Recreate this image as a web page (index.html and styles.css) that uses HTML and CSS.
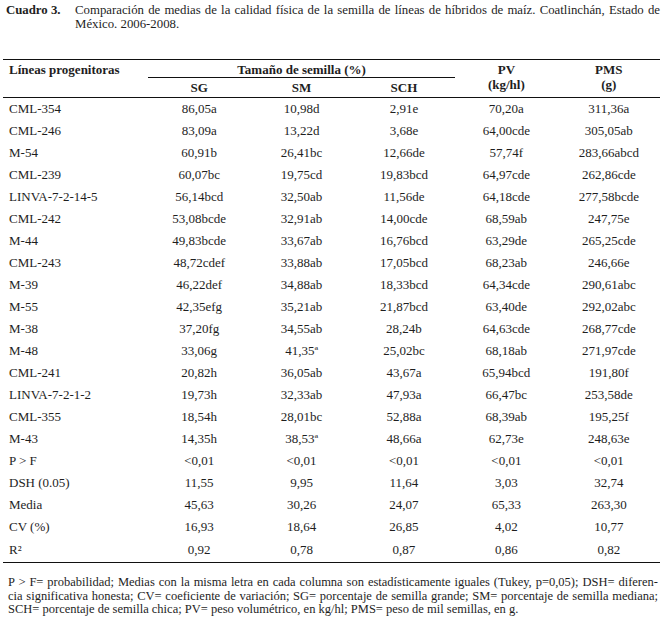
FILE: index.html
```html
<!DOCTYPE html>
<html lang="es">
<head>
<meta charset="utf-8">
<title>Cuadro 3</title>
<link rel="stylesheet" href="styles.css">
</head>
<body>
<div class="page">
  <div class="caption">
    <div class="cap-label">Cuadro 3.</div>
    <div class="cap-text">
      <span class="jline">Comparación de medias de la calidad física de la semilla de líneas de híbridos de maíz. Coatlinchán, Estado de</span>
      <span class="line">México. 2006-2008.</span>
    </div>
  </div>

  <table class="data">
    <thead>
      <tr class="h1">
        <th rowspan="2" class="lab">Líneas progenitoras</th>
        <th colspan="3" class="group">Tamaño de semilla (%)</th>
        <th rowspan="2" class="two">PV<br>(kg/hl)</th>
        <th rowspan="2" class="two">PMS<br>(g)</th>
      </tr>
      <tr class="h2">
        <th>SG</th>
        <th>SM</th>
        <th>SCH</th>
      </tr>
    </thead>
    <tbody>
      <tr><td class="lab">CML-354</td><td>86,05a</td><td>10,98d</td><td>2,91e</td><td>70,20a</td><td>311,36a</td></tr>
      <tr><td class="lab">CML-246</td><td>83,09a</td><td>13,22d</td><td>3,68e</td><td>64,00cde</td><td>305,05ab</td></tr>
      <tr><td class="lab">M-54</td><td>60,91b</td><td>26,41bc</td><td>12,66de</td><td>57,74f</td><td>283,66abcd</td></tr>
      <tr><td class="lab">CML-239</td><td>60,07bc</td><td>19,75cd</td><td>19,83bcd</td><td>64,97cde</td><td>262,86cde</td></tr>
      <tr><td class="lab">LINVA-7-2-14-5</td><td>56,14bcd</td><td>32,50ab</td><td>11,56de</td><td>64,18cde</td><td>277,58bcde</td></tr>
      <tr><td class="lab">CML-242</td><td>53,08bcde</td><td>32,91ab</td><td>14,00cde</td><td>68,59ab</td><td>247,75e</td></tr>
      <tr><td class="lab">M-44</td><td>49,83bcde</td><td>33,67ab</td><td>16,76bcd</td><td>63,29de</td><td>265,25cde</td></tr>
      <tr><td class="lab">CML-243</td><td>48,72cdef</td><td>33,88ab</td><td>17,05bcd</td><td>68,23ab</td><td>246,66e</td></tr>
      <tr><td class="lab">M-39</td><td>46,22def</td><td>34,88ab</td><td>18,33bcd</td><td>64,34cde</td><td>290,61abc</td></tr>
      <tr><td class="lab">M-55</td><td>42,35efg</td><td>35,21ab</td><td>21,87bcd</td><td>63,40de</td><td>292,02abc</td></tr>
      <tr><td class="lab">M-38</td><td>37,20fg</td><td>34,55ab</td><td>28,24b</td><td>64,63cde</td><td>268,77cde</td></tr>
      <tr><td class="lab">M-48</td><td>33,06g</td><td>41,35ª</td><td>25,02bc</td><td>68,18ab</td><td>271,97cde</td></tr>
      <tr><td class="lab">CML-241</td><td>20,82h</td><td>36,05ab</td><td>43,67a</td><td>65,94bcd</td><td>191,80f</td></tr>
      <tr><td class="lab">LINVA-7-2-1-2</td><td>19,73h</td><td>32,33ab</td><td>47,93a</td><td>66,47bc</td><td>253,58de</td></tr>
      <tr><td class="lab">CML-355</td><td>18,54h</td><td>28,01bc</td><td>52,88a</td><td>68,39ab</td><td>195,25f</td></tr>
      <tr><td class="lab">M-43</td><td>14,35h</td><td>38,53ª</td><td>48,66a</td><td>62,73e</td><td>248,63e</td></tr>
      <tr><td class="lab">P &gt; F</td><td>&lt;0,01</td><td>&lt;0,01</td><td>&lt;0,01</td><td>&lt;0,01</td><td>&lt;0,01</td></tr>
      <tr><td class="lab">DSH (0.05)</td><td>11,55</td><td>9,95</td><td>11,64</td><td>3,03</td><td>32,74</td></tr>
      <tr><td class="lab">Media</td><td>45,63</td><td>30,26</td><td>24,07</td><td>65,33</td><td>263,30</td></tr>
      <tr><td class="lab">CV (%)</td><td>16,93</td><td>18,64</td><td>26,85</td><td>4,02</td><td>10,77</td></tr>
      <tr><td class="lab">R²</td><td>0,92</td><td>0,78</td><td>0,87</td><td>0,86</td><td>0,82</td></tr>
    </tbody>
  </table>

  <div class="foot">
    <span class="jline">P &gt; F= probabilidad; Medias con la misma letra en cada columna son estadísticamente iguales (Tukey, p=0,05); DSH= diferen-</span>
    <span class="jline">cia significativa honesta; CV= coeficiente de variación; SG= porcentaje de semilla grande; SM= porcentaje de semilla mediana;</span>
    <span class="line">SCH= porcentaje de semilla chica; PV= peso volumétrico, en kg/hl; PMS= peso de mil semillas, en g.</span>
  </div>
</div>
</body>
</html>
```

FILE: styles.css
```css
html, body {
  margin: 0;
  padding: 0;
  background: #fff;
}

.page {
  width: 663px;
  font-family: "Liberation Serif", "Times New Roman", serif;
  color: #1e1e1e;
}

.caption {
  display: flex;
  padding: 3px 3px 0 6px;
  font-size: 12.8px;
  line-height: 14px;
}

.cap-label {
  flex: 0 0 69px;
  font-weight: bold;
}

.cap-text {
  flex: 1;
}

.jline {
  display: block;
  text-align: justify;
  text-align-last: justify;
  white-space: nowrap;
}

.line {
  display: block;
  white-space: nowrap;
}

.data {
  margin: 28px 0 0 3px;
  width: 657px;
  border-collapse: collapse;
  table-layout: fixed;
  font-size: 13px;
  border-top: 1px solid #111;
  border-bottom: 1px solid #111;
}

.data th,
.data td {
  padding: 0;
  text-align: center;
  font-weight: normal;
}

.data thead th {
  font-weight: bold;
}

.data th.lab,
.data td.lab {
  width: 139px;
  text-align: left;
  padding-left: 6px;
}

.data .h1 th {
  height: 15px;
  line-height: 15px;
  vertical-align: top;
  padding-top: 2px;
}

.data .h1 th.group {
  border-bottom: 1px solid #111;
}

.data .h2 th {
  height: 19px;
  line-height: 19px;
  vertical-align: middle;
}

.data thead tr.h2 th,
.data thead th.lab,
.data thead th.two {
  border-bottom: 1px solid #111;
}

.data tbody td {
  height: 22px;
  line-height: 22px;
  vertical-align: middle;
}

.data tbody tr:last-child td {
  height: 24px;
}

.foot {
  padding: 13px 5px 0 8px;
  font-size: 12.5px;
  line-height: 13.5px;
}
```
